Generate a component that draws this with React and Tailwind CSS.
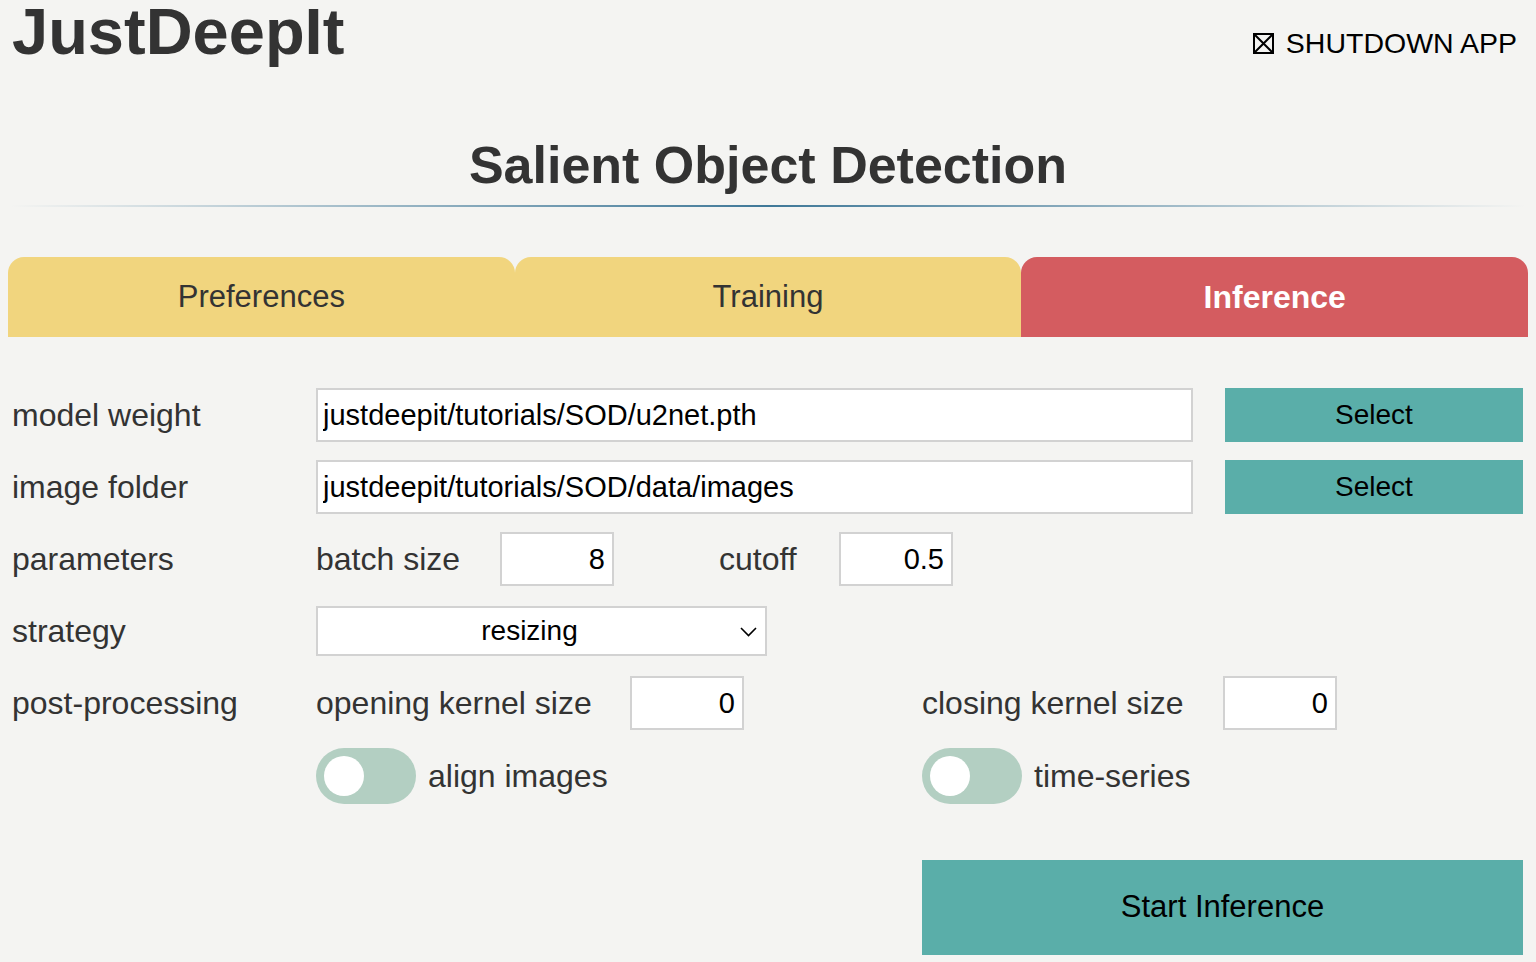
import { useState } from 'react';

const font = { fontFamily: '"Liberation Sans", Arial, sans-serif' };

function Toggle({ label }) {
  const [on, setOn] = useState(false);
  return (
    <div className="flex items-center">
      <button
        onClick={() => setOn(!on)}
        className={`flex items-center w-[100px] h-[56px] rounded-full px-[8px] ${on ? 'bg-[#5aaea9] justify-end' : 'bg-[#b3cfc2] justify-start'}`}
      >
        <span className="block w-[40px] h-[40px] rounded-full bg-white" />
      </button>
      <span className="ml-[12px] text-[32px] text-[#333]">{label}</span>
    </div>
  );
}

function NumInput({ value }) {
  return (
    <input
      defaultValue={value}
      className="w-[114px] h-[54px] bg-white border-2 border-[#d2d2d2] text-right pr-[7px] text-[29px] text-black outline-none"
    />
  );
}

export default function App() {
  const [tab, setTab] = useState('Inference');
  const tabs = ['Preferences', 'Training', 'Inference'];

  return (
    <div className="min-h-screen bg-[#f4f4f2] text-[#333] overflow-hidden" style={font}>
      {/* Header */}
      <div className="flex items-start justify-between">
        <h1 className="ml-[12px] -mt-[1px] text-[65px] leading-none font-bold text-[#333]">JustDeepIt</h1>
        <button className="flex items-center mt-[29px] mr-[19px] text-[28.5px] leading-none text-black">
          <svg width="21" height="21" viewBox="0 0 21 21" className="mr-[12px]">
            <rect x="1" y="1" width="19" height="19" fill="none" stroke="black" strokeWidth="2" />
            <path d="M2 2 L19 19 M19 2 L2 19" stroke="black" strokeWidth="2" />
          </svg>
          SHUTDOWN APP
        </button>
      </div>

      <h2 className="mt-[75px] text-center text-[52px] leading-none font-bold text-[#333]">
        Salient Object Detection
      </h2>
      <div className="mt-[14px] mx-[10px] h-[2px] bg-linear-to-r from-transparent via-[#3f7898] to-transparent" />

      {/* Tabs */}
      <div className="mt-[50px] mx-2 flex">
        {tabs.map(t => (
          <button
            key={t}
            onClick={() => setTab(t)}
            className={`flex-1 h-[80px] rounded-t-[16px] flex items-center justify-center ${
              tab === t ? 'bg-[#d45c60] text-white font-bold text-[32px]' : 'bg-[#f1d57e] text-[#333] text-[31px]'
            }`}
          >
            {t}
          </button>
        ))}
      </div>

      {/* Form */}
      <div className="mt-[51px] px-3 flex flex-col gap-[18px] text-[32px]">
        <div className="flex items-center h-[54px]">
          <div className="w-[304px]">model weight</div>
          <input
            defaultValue="justdeepit/tutorials/SOD/u2net.pth"
            className="w-[877px] h-[54px] bg-white border-2 border-[#d2d2d2] pl-[5px] text-[29px] text-black outline-none"
          />
          <button className="ml-[32px] w-[298px] h-[54px] bg-[#5aaea9] text-[28px] text-black">Select</button>
        </div>

        <div className="flex items-center h-[54px]">
          <div className="w-[304px]">image folder</div>
          <input
            defaultValue="justdeepit/tutorials/SOD/data/images"
            className="w-[877px] h-[54px] bg-white border-2 border-[#d2d2d2] pl-[5px] text-[29px] text-black outline-none"
          />
          <button className="ml-[32px] w-[298px] h-[54px] bg-[#5aaea9] text-[28px] text-black">Select</button>
        </div>

        <div className="flex items-center h-[54px]">
          <div className="w-[304px]">parameters</div>
          <div className="w-[184px]">batch size</div>
          <NumInput value="8" />
          <div className="ml-[105px] w-[120px]">cutoff</div>
          <NumInput value="0.5" />
        </div>

        <div className="flex items-center h-[54px]">
          <div className="w-[304px]">strategy</div>
          <div className="relative w-[451px] h-[50px] bg-white border-2 border-[#d2d2d2] flex items-center justify-center pr-[24px]">
            <span className="text-[28px] text-black">resizing</span>
            <svg width="17" height="10" viewBox="0 0 17 10" className="absolute right-[8px] top-[19px]">
              <path d="M1 1 L8.5 8.5 L16 1" fill="none" stroke="black" strokeWidth="1.6" />
            </svg>
          </div>
        </div>

        <div className="flex items-center h-[54px]">
          <div className="w-[304px]">post-processing</div>
          <div className="w-[314px]">opening kernel size</div>
          <NumInput value="0" />
          <div className="ml-[178px] w-[301px]">closing kernel size</div>
          <NumInput value="0" />
        </div>

        <div className="flex items-center h-[56px]">
          <div className="w-[304px]" />
          <div className="w-[606px]">
            <Toggle label="align images" />
          </div>
          <Toggle label="time-series" />
        </div>
      </div>

      <div className="mt-[56px] pl-[922px]">
        <button className="w-[601px] h-[95px] bg-[#5aaea9] text-[31px] text-black">Start Inference</button>
      </div>
    </div>
  );
}
